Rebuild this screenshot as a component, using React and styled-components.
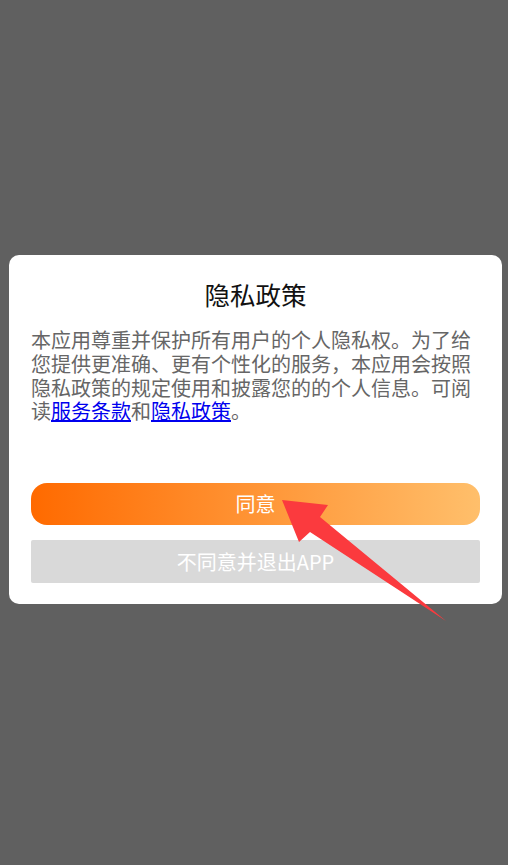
import React from "react";
import styled, { createGlobalStyle } from "styled-components";

const Global = createGlobalStyle`
  html, body { margin: 0; padding: 0; background: #606060; }
  body { font-family: "Noto Sans CJK SC", "Noto Sans", sans-serif; }
`;

const Page = styled.div`
  position: relative;
  width: 508px;
  height: 865px;
  background: #606060;
  box-sizing: border-box;
  padding-top: 255px;
  padding-left: 9px;
`;

const Card = styled.div`
  width: 493px;
  box-sizing: border-box;
  background: #ffffff;
  border-radius: 10px;
  padding: 23px 22px 21px 22px;
  display: flex;
  flex-direction: column;
`;

const Title = styled.h1`
  margin: 0;
  font-size: 25.5px;
  line-height: 32px;
  font-weight: 400;
  color: #111111;
  text-align: center;
`;

const Body = styled.p`
  margin: 18px 0 0 0;
  font-size: 20px;
  line-height: 23.8px;
  color: #666666;
  text-align: left;
`;

const Link = styled.a`
  color: #0000ee;
  text-decoration: underline;
`;

const Buttons = styled.div`
  display: flex;
  flex-direction: column;
  gap: 15px;
  margin-top: 60px;
`;

const Button = styled.button`
  border: none;
  margin: 0;
  padding: 0;
  width: 100%;
  height: ${(p) => (p.$primary ? "42px" : "43px")};
  border-radius: ${(p) => (p.$primary ? "16px" : "2px")};
  background: ${(p) =>
    p.$primary ? "linear-gradient(90deg, #ff6a00 0%, #ffbf6b 100%)" : "#d9d9d9"};
  color: #ffffff;
  font-family: "Noto Sans CJK SC", "Noto Sans", sans-serif;
  font-size: 20px;
  line-height: 1;
  display: flex;
  align-items: center;
  justify-content: center;
`;

const Arrow = styled.svg`
  position: absolute;
  left: 0;
  top: 0;
  pointer-events: none;
`;

export default function App() {
  return (
    <>
      <Global />
      <Page>
        <Card>
          <Title>隐私政策</Title>
          <Body>
            本应用尊重并保护所有用户的个人隐私权。为了给您提供更准确、更有个性化的服务，本应用会按照隐私政策的规定使用和披露您的的个人信息。可阅读
            <Link href="#">服务条款</Link>和<Link href="#">隐私政策</Link>。
          </Body>
          <Buttons>
            <Button $primary>同意</Button>
            <Button>不同意并退出APP</Button>
          </Buttons>
        </Card>
        <Arrow width="508" height="865" viewBox="0 0 508 865">
          <polygon
            points="282,500 328,505 320,517 446,621 310,532 299,542"
            fill="#fb3a3e"
          />
        </Arrow>
      </Page>
    </>
  );
}
